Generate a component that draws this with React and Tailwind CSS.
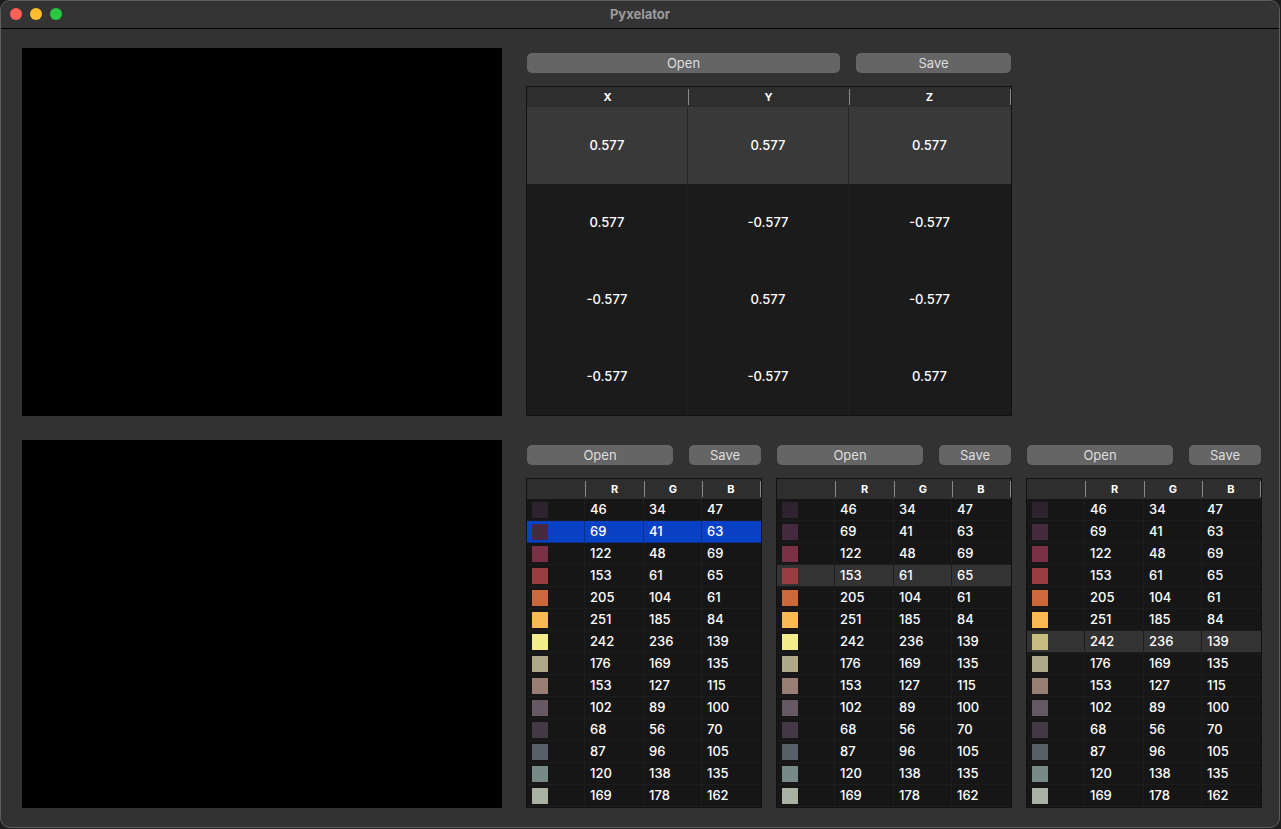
import React from 'react';

const vectors = [
  ['0.577', '0.577', '0.577'],
  ['0.577', '-0.577', '-0.577'],
  ['-0.577', '0.577', '-0.577'],
  ['-0.577', '-0.577', '0.577'],
];

const palette = [
  [46, 34, 47],
  [69, 41, 63],
  [122, 48, 69],
  [153, 61, 65],
  [205, 104, 61],
  [251, 185, 84],
  [242, 236, 139],
  [176, 169, 135],
  [153, 127, 115],
  [102, 89, 100],
  [68, 56, 70],
  [87, 96, 105],
  [120, 138, 135],
  [169, 178, 162],
];

function Button({ children, className = '' }) {
  return (
    <button className={`h-5 rounded-[5px] bg-[#656565] text-[13px] leading-5 text-[#dedede] ${className}`}>
      {children}
    </button>
  );
}

function HeaderCell({ children, className = '' }) {
  return (
    <div className={`relative flex items-center justify-center text-[11px] font-bold text-white ${className}`}>
      {children}
      <span className="absolute -right-px top-[2px] bottom-[2px] w-px bg-[#8a8a8a]" />
    </div>
  );
}

function VectorTable() {
  return (
    <div className="flex h-[330px] w-[486px] flex-col border border-[#111] bg-[#1b1b1b]">
      <div className="flex h-5 bg-[#2e2e2e]">
        {['X', 'Y', 'Z'].map((h) => (
          <HeaderCell key={h} className="w-[161px]">{h}</HeaderCell>
        ))}
      </div>
      {vectors.map((row, i) => (
        <div key={i} className={`flex h-[77px] ${i === 0 ? 'bg-[#393939]' : 'bg-[#1b1b1b]'}`}>
          {row.map((v, j) => (
            <div
              key={j}
              className={`flex w-[161px] items-center justify-center pt-px text-[13px] font-medium text-white ${j < 2 ? (i === 0 ? 'border-r border-[#262626]' : 'border-r border-[#202020]') : ''}`}
            >
              {v}
            </div>
          ))}
        </div>
      ))}
    </div>
  );
}

function PaletteGroup({ selected, hover }) {
  return (
    <div className="flex w-[236px] flex-col">
      <div className="flex gap-4 px-px pt-[5px]">
        <Button className="w-[146px]">Open</Button>
        <Button className="w-[72px]">Save</Button>
      </div>
      <div className="mt-[13px] flex h-[330px] flex-col border border-[#111] bg-[#161616]">
        <div className="flex h-5 bg-[#2e2e2e]">
          <HeaderCell className="w-[58px]" />
          <HeaderCell className="w-[59px]">R</HeaderCell>
          <HeaderCell className="w-[58px]">G</HeaderCell>
          <HeaderCell className="w-[58px]">B</HeaderCell>
        </div>
        {palette.map((c, i) => {
          const bg = i === selected ? 'bg-[#0841c6]' : i === hover ? 'bg-[#333333]' : 'bg-[#161616]';
          const line = i === selected ? 'border-[#0a2f8a]' : 'border-[#1d1d1d]';
          const swatch = i === hover && i === 6 ? 'rgb(200,189,128)' : `rgb(${c[0]},${c[1]},${c[2]})`;
          return (
            <div key={i} className={`flex h-[22px] border-b ${line} ${bg}`}>
              <div className={`flex w-[58px] items-center border-r pl-[5px] pt-px ${line}`}>
                <div className="h-4 w-4" style={{ backgroundColor: swatch }} />
              </div>
              {c.map((v, j) => (
                <div
                  key={j}
                  className={`flex items-center pl-[5px] pt-px text-[13px] font-medium text-white ${j === 0 ? 'w-[59px]' : 'w-[58px]'} ${j < 2 ? `border-r ${line}` : ''}`}
                >
                  {v}
                </div>
              ))}
            </div>
          );
        })}
      </div>
    </div>
  );
}

export default function App() {
  return (
    <div className="h-[829px] w-[1281px] bg-[#1d1d1d] font-['Inter','Liberation_Sans',sans-serif]">
      <div className="flex h-[828px] w-[1280px] flex-col overflow-hidden rounded-[10px] border border-[#5e5e5e] bg-[#323232]">
        {/* Title bar */}
        <div className="relative flex h-[28px] items-center justify-center border-b border-black bg-[#343434]">
          <div className="absolute left-[9px] top-[7px] flex gap-2">
            <span className="h-3 w-3 rounded-full bg-[#fe5f57]" />
            <span className="h-3 w-3 rounded-full bg-[#febc2e]" />
            <span className="h-3 w-3 rounded-full bg-[#28c840]" />
          </div>
          <span className="text-[13px] font-bold text-[#9b9b9b]">Pyxelator</span>
        </div>

        {/* Content */}
        <div className="flex flex-col gap-6 pl-[21px] pt-[19px]">
          <div className="flex gap-6">
            <div className="h-[368px] w-[480px] bg-black" />
            <div className="flex flex-col">
              <div className="flex gap-4 px-px pt-[5px]">
                <Button className="w-[313px]">Open</Button>
                <Button className="w-[155px]">Save</Button>
              </div>
              <div className="mt-[13px]">
                <VectorTable />
              </div>
            </div>
          </div>
          <div className="flex gap-6">
            <div className="h-[368px] w-[480px] bg-black" />
            <div className="flex gap-[14px]">
              <PaletteGroup selected={1} />
              <PaletteGroup hover={3} />
              <PaletteGroup hover={6} />
            </div>
          </div>
        </div>
      </div>
    </div>
  );
}
